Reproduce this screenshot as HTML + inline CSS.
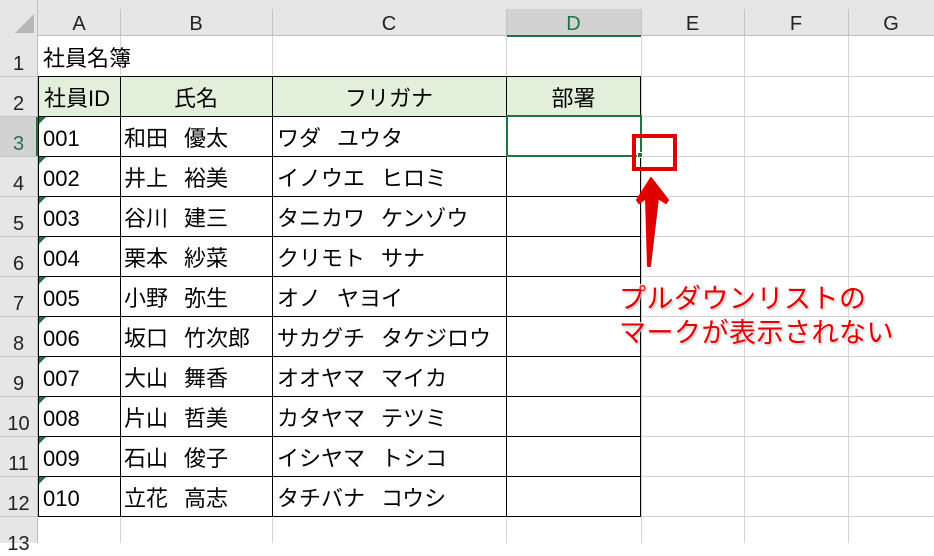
<!DOCTYPE html>
<html><head><meta charset="utf-8"><style>
body{margin:0;width:934px;height:543px;overflow:hidden;background:#fff;font-family:"Liberation Sans","Noto Sans CJK JP",sans-serif;position:relative}
div{position:absolute;box-sizing:border-box}
.hl{height:1px;background:#d4d4d4}
.vl{width:1px;background:#d4d4d4}
.bh{height:1px;background:#000}
.bv{width:1px;background:#000}
.ch{top:9px;height:27px;font-size:20px;color:#222;text-align:center;line-height:30px}
.rn{left:0;width:37px;text-align:center;font-size:20px;color:#222;line-height:24px}
.t{font-size:22px;color:#000;line-height:24px;white-space:pre}
.t i{display:inline-block;width:16px}
.tri{width:0;height:0;border-top:7px solid #217346;border-right:7px solid transparent}
.note{font-size:27px;color:#e00000;white-space:nowrap;text-shadow:0 0 2px #fff,0 0 2px #fff,1px 1px 2px #888,-1px -1px 1px #fff;letter-spacing:0.5px}
</style></head><body>
<div style="left:0;top:0;width:934px;height:36px;background:#e6e6e6;border-bottom:1px solid #bdbdbd"></div>
<div style="left:0;top:0;width:38px;height:543px;background:#e6e6e6;border-right:1px solid #bdbdbd"></div>
<div style="left:15px;top:14px;width:0;height:0;border-left:19px solid transparent;border-bottom:19px solid #b8b8b8"></div>
<div style="left:506px;top:9px;width:135px;height:28px;background:#d2d2d2;border-bottom:2px solid #217346"></div>
<div style="left:0;top:116px;width:38px;height:40px;background:#d2d2d2;border-right:2px solid #217346"></div>
<div class="ch" style="left:38px;width:82px">A</div>
<div class="ch" style="left:120px;width:152px">B</div>
<div class="ch" style="left:272px;width:234px">C</div>
<div class="ch" style="left:506px;width:135px;color:#217346">D</div>
<div class="ch" style="left:641px;width:103px">E</div>
<div class="ch" style="left:744px;width:104px">F</div>
<div class="ch" style="left:848px;width:86px">G</div>
<div class="vl" style="left:120px;top:9px;height:27px;background:#c4c4c4"></div>
<div class="vl" style="left:272px;top:9px;height:27px;background:#c4c4c4"></div>
<div class="vl" style="left:506px;top:9px;height:27px;background:#c4c4c4"></div>
<div class="vl" style="left:641px;top:9px;height:27px;background:#c4c4c4"></div>
<div class="vl" style="left:744px;top:9px;height:27px;background:#c4c4c4"></div>
<div class="vl" style="left:848px;top:9px;height:27px;background:#c4c4c4"></div>
<div class="vl" style="left:120px;top:36px;height:507px"></div>
<div class="vl" style="left:272px;top:36px;height:507px"></div>
<div class="vl" style="left:506px;top:36px;height:507px"></div>
<div class="vl" style="left:641px;top:36px;height:507px"></div>
<div class="vl" style="left:744px;top:36px;height:507px"></div>
<div class="vl" style="left:848px;top:36px;height:507px"></div>
<div class="hl" style="left:38px;top:76px;width:896px"></div>
<div class="hl" style="left:38px;top:116px;width:896px"></div>
<div class="hl" style="left:38px;top:156px;width:896px"></div>
<div class="hl" style="left:38px;top:196px;width:896px"></div>
<div class="hl" style="left:38px;top:236px;width:896px"></div>
<div class="hl" style="left:38px;top:276px;width:896px"></div>
<div class="hl" style="left:38px;top:316px;width:896px"></div>
<div class="hl" style="left:38px;top:356px;width:896px"></div>
<div class="hl" style="left:38px;top:396px;width:896px"></div>
<div class="hl" style="left:38px;top:436px;width:896px"></div>
<div class="hl" style="left:38px;top:476px;width:896px"></div>
<div class="hl" style="left:38px;top:516px;width:896px"></div>
<div style="left:0;top:76px;width:38px;height:1px;background:#c4c4c4"></div>
<div style="left:0;top:116px;width:38px;height:1px;background:#c4c4c4"></div>
<div style="left:0;top:156px;width:38px;height:1px;background:#c4c4c4"></div>
<div style="left:0;top:196px;width:38px;height:1px;background:#c4c4c4"></div>
<div style="left:0;top:236px;width:38px;height:1px;background:#c4c4c4"></div>
<div style="left:0;top:276px;width:38px;height:1px;background:#c4c4c4"></div>
<div style="left:0;top:316px;width:38px;height:1px;background:#c4c4c4"></div>
<div style="left:0;top:356px;width:38px;height:1px;background:#c4c4c4"></div>
<div style="left:0;top:396px;width:38px;height:1px;background:#c4c4c4"></div>
<div style="left:0;top:436px;width:38px;height:1px;background:#c4c4c4"></div>
<div style="left:0;top:476px;width:38px;height:1px;background:#c4c4c4"></div>
<div style="left:0;top:516px;width:38px;height:1px;background:#c4c4c4"></div>
<div class="rn" style="top:52px">1</div>
<div class="rn" style="top:92px">2</div>
<div class="rn" style="top:132px;color:#217346">3</div>
<div class="rn" style="top:172px">4</div>
<div class="rn" style="top:212px">5</div>
<div class="rn" style="top:252px">6</div>
<div class="rn" style="top:292px">7</div>
<div class="rn" style="top:332px">8</div>
<div class="rn" style="top:372px">9</div>
<div class="rn" style="top:412px">10</div>
<div class="rn" style="top:452px">11</div>
<div class="rn" style="top:492px">12</div>
<div class="rn" style="top:532px">13</div>
<div style="left:38px;top:76px;width:603px;height:40px;background:#e2efda"></div>
<div class="bh" style="left:38px;top:76px;width:603px"></div>
<div class="bh" style="left:38px;top:116px;width:603px"></div>
<div class="bh" style="left:38px;top:156px;width:603px"></div>
<div class="bh" style="left:38px;top:196px;width:603px"></div>
<div class="bh" style="left:38px;top:236px;width:603px"></div>
<div class="bh" style="left:38px;top:276px;width:603px"></div>
<div class="bh" style="left:38px;top:316px;width:603px"></div>
<div class="bh" style="left:38px;top:356px;width:603px"></div>
<div class="bh" style="left:38px;top:396px;width:603px"></div>
<div class="bh" style="left:38px;top:436px;width:603px"></div>
<div class="bh" style="left:38px;top:476px;width:603px"></div>
<div class="bh" style="left:38px;top:516px;width:603px"></div>
<div class="bv" style="left:38px;top:76px;height:441px"></div>
<div class="bv" style="left:120px;top:76px;height:441px"></div>
<div class="bv" style="left:272px;top:76px;height:441px"></div>
<div class="bv" style="left:506px;top:76px;height:441px"></div>
<div class="bv" style="left:640px;top:76px;height:441px"></div>
<div style="left:506px;top:115px;width:136px;height:42px;border:2px solid #217346"></div>
<div style="left:637px;top:152px;width:6px;height:6px;background:#217346;border:1px solid #fff"></div>
<div class="t" style="left:43px;top:47px">社員名簿</div>
<div class="t" style="left:44px;top:87px">社員ID</div>
<div class="t" style="left:120px;top:87px;width:152px;text-align:center">氏名</div>
<div class="t" style="left:272px;top:87px;width:234px;text-align:center">フリガナ</div>
<div class="t" style="left:506px;top:87px;width:135px;text-align:center">部署</div>
<div class="t" style="left:43px;top:127px">001</div><div class="t" style="left:124px;top:127px">和田<i></i>優太</div><div class="t" style="left:277px;top:127px">ワダ<i></i>ユウタ</div>
<div class="t" style="left:43px;top:167px">002</div><div class="t" style="left:124px;top:167px">井上<i></i>裕美</div><div class="t" style="left:277px;top:167px">イノウエ<i></i>ヒロミ</div>
<div class="t" style="left:43px;top:207px">003</div><div class="t" style="left:124px;top:207px">谷川<i></i>建三</div><div class="t" style="left:277px;top:207px">タニカワ<i></i>ケンゾウ</div>
<div class="t" style="left:43px;top:247px">004</div><div class="t" style="left:124px;top:247px">栗本<i></i>紗菜</div><div class="t" style="left:277px;top:247px">クリモト<i></i>サナ</div>
<div class="t" style="left:43px;top:287px">005</div><div class="t" style="left:124px;top:287px">小野<i></i>弥生</div><div class="t" style="left:277px;top:287px">オノ<i></i>ヤヨイ</div>
<div class="t" style="left:43px;top:327px">006</div><div class="t" style="left:124px;top:327px">坂口<i></i>竹次郎</div><div class="t" style="left:277px;top:327px">サカグチ<i></i>タケジロウ</div>
<div class="t" style="left:43px;top:367px">007</div><div class="t" style="left:124px;top:367px">大山<i></i>舞香</div><div class="t" style="left:277px;top:367px">オオヤマ<i></i>マイカ</div>
<div class="t" style="left:43px;top:407px">008</div><div class="t" style="left:124px;top:407px">片山<i></i>哲美</div><div class="t" style="left:277px;top:407px">カタヤマ<i></i>テツミ</div>
<div class="t" style="left:43px;top:447px">009</div><div class="t" style="left:124px;top:447px">石山<i></i>俊子</div><div class="t" style="left:277px;top:447px">イシヤマ<i></i>トシコ</div>
<div class="t" style="left:43px;top:487px">010</div><div class="t" style="left:124px;top:487px">立花<i></i>高志</div><div class="t" style="left:277px;top:487px">タチバナ<i></i>コウシ</div>
<div class="tri" style="left:39px;top:117px"></div><div class="tri" style="left:39px;top:157px"></div><div class="tri" style="left:39px;top:197px"></div><div class="tri" style="left:39px;top:237px"></div><div class="tri" style="left:39px;top:277px"></div><div class="tri" style="left:39px;top:317px"></div><div class="tri" style="left:39px;top:357px"></div><div class="tri" style="left:39px;top:397px"></div><div class="tri" style="left:39px;top:437px"></div><div class="tri" style="left:39px;top:477px"></div>
<div style="left:632px;top:134px;width:45px;height:37px;border:4px solid #e00000"></div>
<svg style="position:absolute;left:630px;top:170px" width="50" height="110"><path d="M21 8 L38 30 L36 33 L28 28 L20 96 L18 96 L16 28 L9 33 L7 30 Z" fill="#e00000" stroke="#e00000" stroke-width="2" stroke-linejoin="round"/></svg>
<div class="note" style="left:619px;top:277px">プルダウンリストの</div>
<div class="note" style="left:619px;top:311px">マークが表示されない</div>
</body></html>
